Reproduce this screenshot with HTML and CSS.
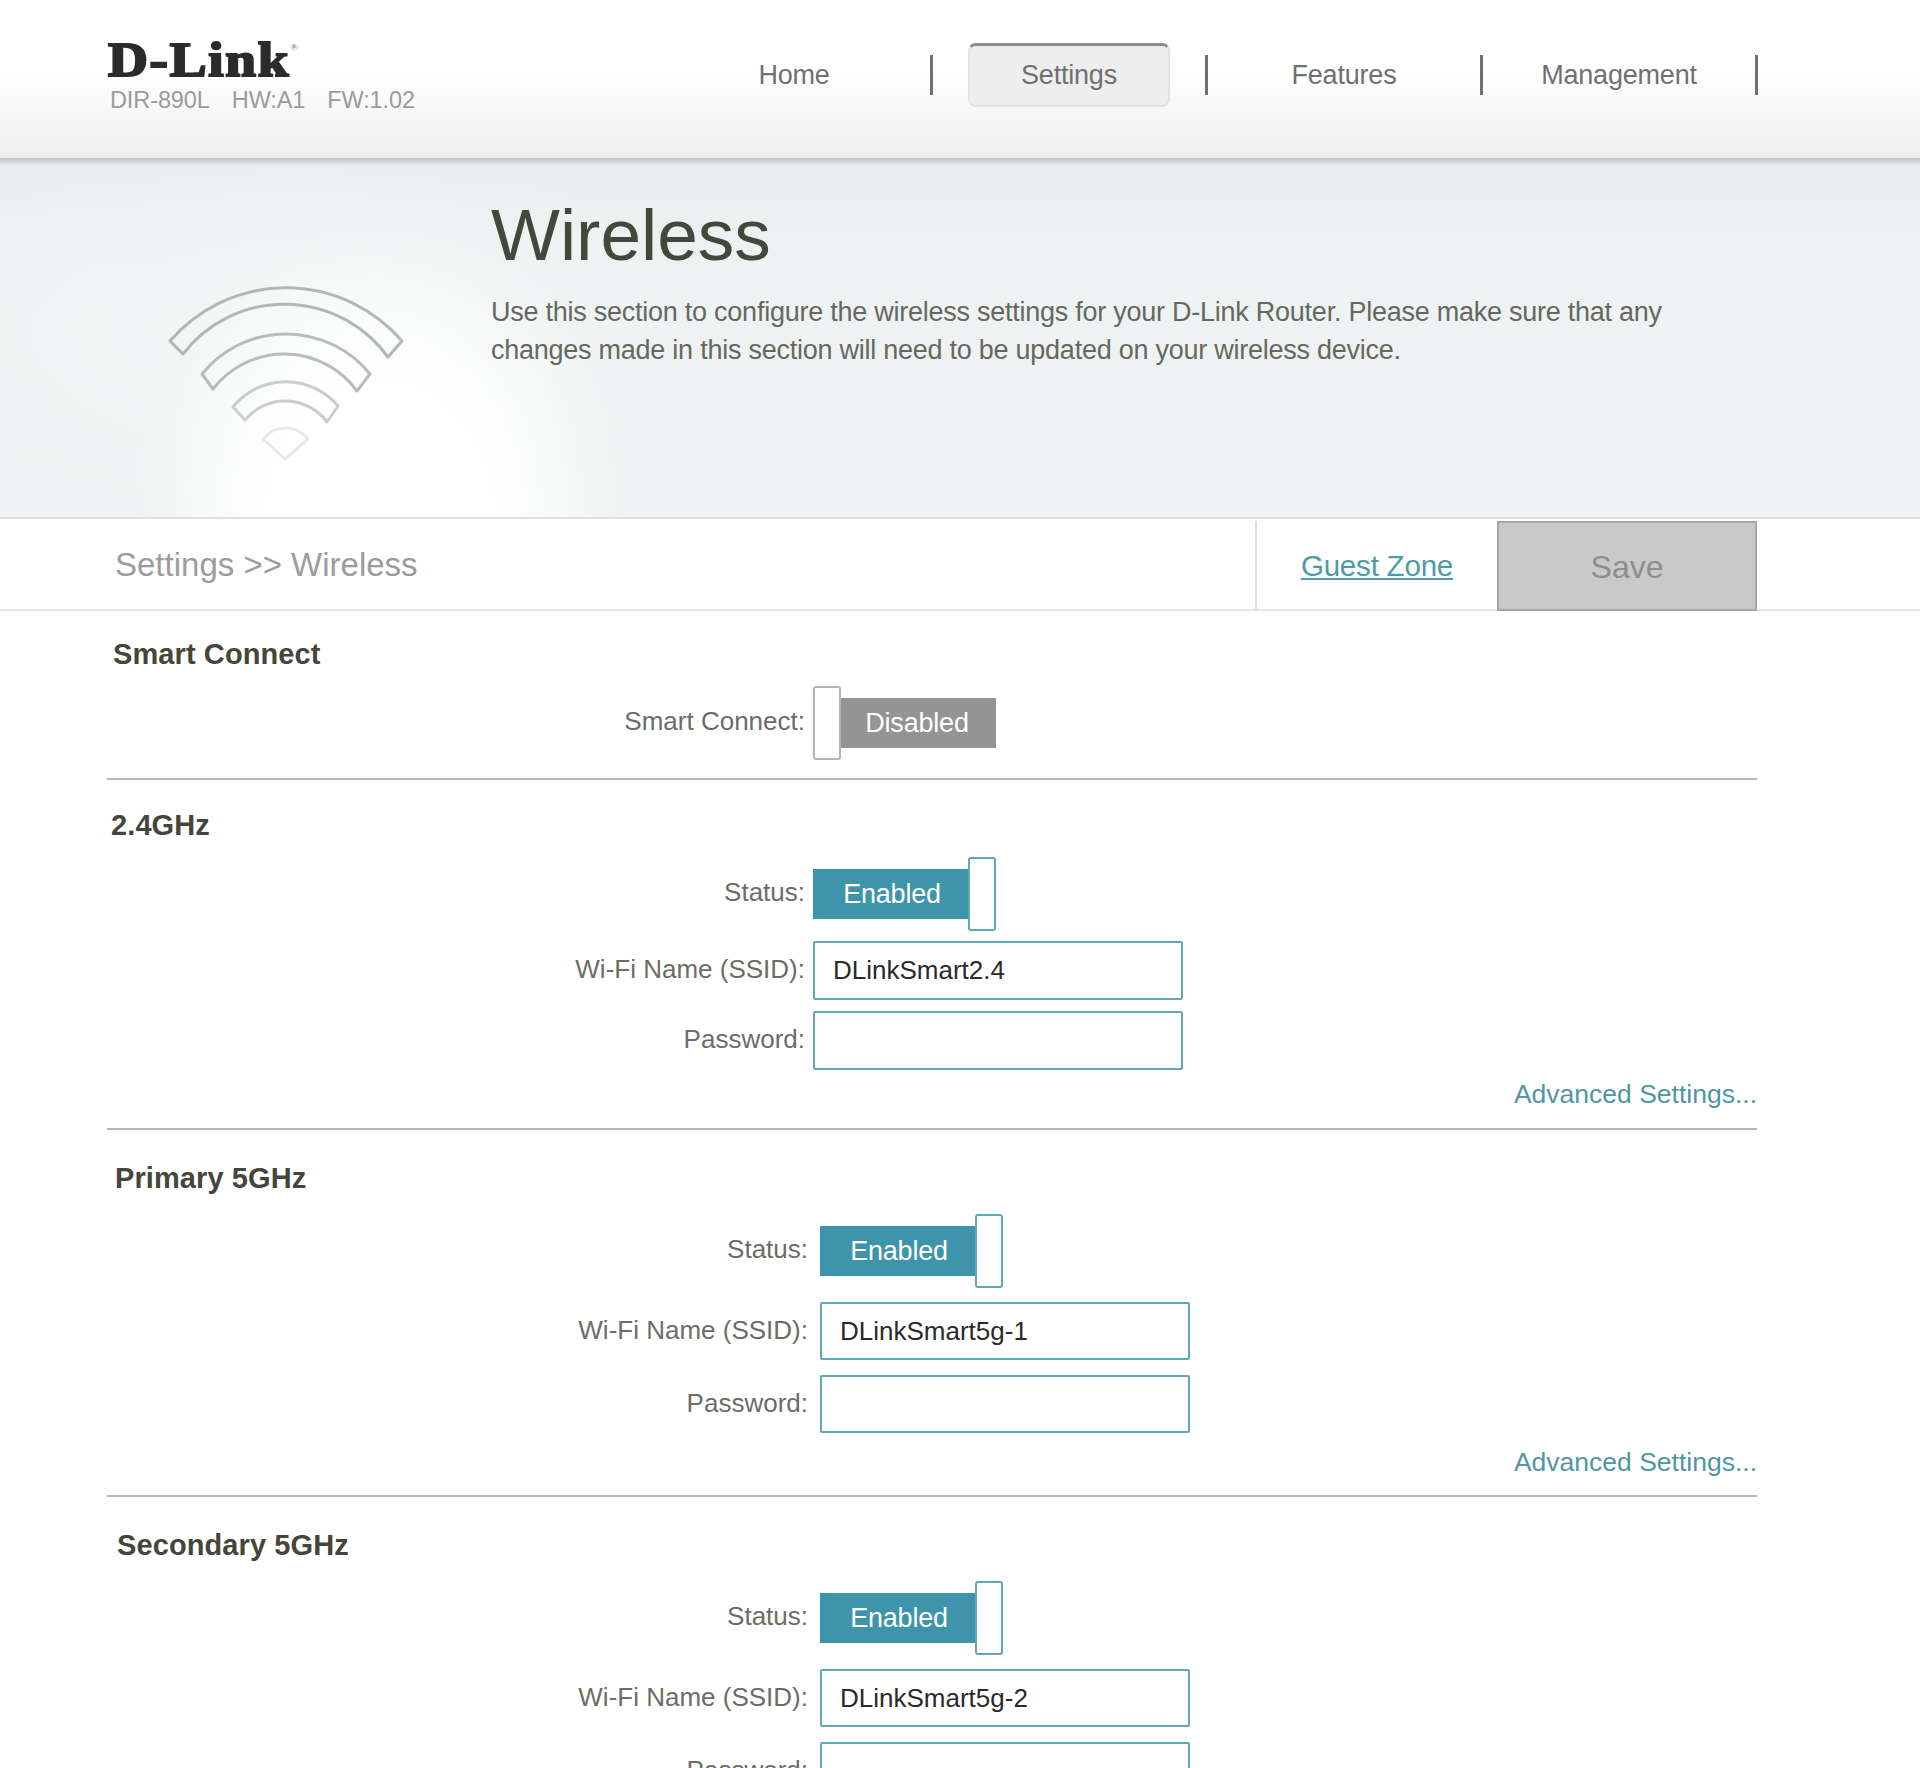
FILE: index.html
```html
<!DOCTYPE html>
<html lang="en">

<head>
    <meta charset="UTF-8">
    <meta name="viewport" content="width=device-width, initial-scale=1.0">
    <title>D-Link Wireless</title>
    <link rel="stylesheet" href="styles.css">
</head>

<body>
    <div class="page">
        <div class="header">
            <div class="header__brand">
                <div class="logo">D-Link<sup class="logo__mark">®</sup></div>
                <p class="model"><span>DIR-890L</span><span>HW:A1</span><span>FW:1.02</span></p>
            </div>
            <div class="nav">
                <div class="nav__item"><a class="nav__link">Home</a></div>
                <div class="nav__item"><a class="nav__link nav__link--active">Settings</a></div>
                <div class="nav__item"><a class="nav__link">Features</a></div>
                <div class="nav__item"><a class="nav__link">Management</a></div>
            </div>
        </div>

        <div class="banner">
            <svg class="banner__icon" viewBox="165 282 242 180" width="242" height="180">
                <path class="arc arc--1" d="M170 340 A153 153 0 0 1 402 340 L388 356 A128 128 0 0 0 183 353 Z" />
                <path class="arc arc--2" d="M202 373 A108 108 0 0 1 370 373 L357 390 A90 90 0 0 0 213 388 Z" />
                <path class="arc arc--3" d="M233 406 A68 68 0 0 1 338 405 L327 421 A52 52 0 0 0 245 419 Z" />
                <path class="arc arc--4" d="M263 438 A28.5 28.5 0 0 1 308 438 L285 458 Z" />
            </svg>
            <div class="banner__text">
                <h1>Wireless</h1>
                <p>Use this section to configure the wireless settings for your D-Link Router. Please make sure that any<br>changes made in this section will need to be updated on your wireless device.</p>
            </div>
        </div>

        <div class="crumbs">
            <p class="crumbs__path">Settings &gt;&gt; Wireless</p>
            <div class="crumbs__actions">
                <a class="guest">Guest Zone</a>
                <button class="save">Save</button>
            </div>
        </div>

        <div class="content">
            <div class="section section--smart">
                <h2>Smart Connect</h2>
                <div class="row row--switch">
                    <label>Smart Connect:</label>
                    <div class="switch switch--off"><span class="switch__knob"></span>Disabled</div>
                </div>
            </div>

            <div class="section section--24">
                <h2>2.4GHz</h2>
                <div class="row row--switch">
                    <label>Status:</label>
                    <div class="switch"><span class="switch__knob"></span>Enabled</div>
                </div>
                <div class="row">
                    <label>Wi-Fi Name (SSID):</label>
                    <input class="field" type="text" value="DLinkSmart2.4">
                </div>
                <div class="row">
                    <label>Password:</label>
                    <input class="field" type="text">
                </div>
                <a class="advanced">Advanced Settings...</a>
            </div>

            <div class="section section--5g">
                <h2>Primary 5GHz</h2>
                <div class="row row--switch">
                    <label>Status:</label>
                    <div class="switch"><span class="switch__knob"></span>Enabled</div>
                </div>
                <div class="row">
                    <label>Wi-Fi Name (SSID):</label>
                    <input class="field" type="text" value="DLinkSmart5g-1">
                </div>
                <div class="row">
                    <label>Password:</label>
                    <input class="field" type="text">
                </div>
                <a class="advanced">Advanced Settings...</a>
            </div>

            <div class="section section--5g section--last">
                <h2>Secondary 5GHz</h2>
                <div class="row row--switch">
                    <label>Status:</label>
                    <div class="switch"><span class="switch__knob"></span>Enabled</div>
                </div>
                <div class="row">
                    <label>Wi-Fi Name (SSID):</label>
                    <input class="field" type="text" value="DLinkSmart5g-2">
                </div>
                <div class="row">
                    <label>Password:</label>
                    <input class="field" type="text">
                </div>
            </div>
        </div>
    </div>
</body>

</html>
```

FILE: styles.css
```css
* {
    margin: 0;
    padding: 0;
    box-sizing: border-box;
}

html,
body {
    height: 1768px;
    overflow: hidden;
    background-color: #fff;
}

body {
    font-family: "Liberation Sans", Arial, sans-serif;
}

.page {
    width: 1920px;
    height: 1768px;
    overflow: hidden;
}

/* header */
.header {
    height: 158px;
    display: flex;
    background: linear-gradient(#fff 0%, #fff 45%, #f6f6f6 75%, #eeeeee 100%);
}

.header__brand {
    width: 658px;
    padding: 36px 0 0 108px;
}

.logo {
    width: 170px;
    height: 48px;
    font-family: "Liberation Serif", serif;
    font-size: 48px;
    font-weight: 700;
    line-height: 48px;
    letter-spacing: 1.5px;
    color: #2b2b2b;
    -webkit-text-stroke: 2px #2b2b2b;
    white-space: nowrap;
    transform: scaleX(1.15);
    transform-origin: left;
}

.logo__mark {
    font-size: 9px;
    letter-spacing: 0;
    vertical-align: 26px;
    line-height: 0;
    -webkit-text-stroke: 0;
    color: #888;
}

.model {
    display: flex;
    gap: 22px;
    margin-top: 1px;
    padding-left: 2px;
    font-size: 23.5px;
    line-height: 30px;
    letter-spacing: -0.1px;
    color: #9b9b9b;
}

.nav {
    display: flex;
}

.nav__item {
    width: 275px;
    height: 40px;
    margin-top: 55px;
    border-right: 3px solid #707070;
    display: flex;
    align-items: center;
    justify-content: center;
}

.nav__link {
    font-size: 27px;
    letter-spacing: -0.2px;
    color: #707070;
}

.nav__link--active {
    width: 202px;
    height: 64px;
    display: flex;
    align-items: center;
    justify-content: center;
    background-color: #eeeeee;
    border: 2px solid #e2e2e2;
    border-top: 3px solid #8c8c8c;
    border-radius: 8px;
}

/* banner */
.banner {
    height: 361px;
    display: flex;
    border-bottom: 2px solid #dfe1e1;
    background:
        linear-gradient(rgba(185, 190, 190, 0.9), rgba(225, 231, 232, 0) 8px),
        radial-gradient(ellipse 250px 300px at 380px 361px, #fff 45%, rgba(255, 255, 255, 0) 100%),
        radial-gradient(ellipse 420px 200px at 300px 170px, rgba(255, 255, 255, 0.35), rgba(255, 255, 255, 0) 100%),
        linear-gradient(#e8eef0 0%, #eef2f2 30%, #f0f3f3 100%);
}

.banner__icon {
    flex: none;
    margin: 125px 0 0 165px;
}

.arc {
    fill: none;
    stroke-width: 3;
    stroke-linejoin: round;
}

.arc--1 {
    stroke: #b4b7b7;
}

.arc--2 {
    stroke: #b9bcbc;
}

.arc--3 {
    stroke: #cbcdcd;
}

.arc--4 {
    stroke: #e8eaea;
}

.banner__text {
    margin-left: 84px;
    padding-top: 35px;
}

h1 {
    font-size: 73px;
    font-weight: 400;
    line-height: 84px;
    color: #45473c;
}

.banner__text p {
    margin-top: 16px;
    font-size: 27px;
    line-height: 38px;
    letter-spacing: -0.25px;
    color: #666860;
    white-space: nowrap;
}

/* breadcrumb bar */
.crumbs {
    height: 92px;
    display: flex;
    justify-content: space-between;
    padding: 2px 163px 0 115px;
    border-bottom: 2px solid #e6e6e6;
}

.crumbs__path {
    font-size: 33px;
    line-height: 88px;
    color: #9c9c9c;
}

.crumbs__actions {
    display: flex;
}

.guest {
    width: 242px;
    border-left: 2px solid #e0e0e0;
    font-size: 29.5px;
    line-height: 90px;
    letter-spacing: -0.2px;
    text-align: center;
    color: #4f9aa6;
    text-decoration: underline;
}

.save {
    width: 260px;
    height: 90px;
    padding-top: 2px;
    font-family: inherit;
    font-size: 32px;
    color: #8e8e8e;
    background-color: #c9c9c9;
    border: 2px solid #a6a6a6;
}

/* settings */
.content {
    width: 1650px;
    margin-left: 107px;
}

.section {
    padding-top: 30px;
    padding-bottom: 18px;
    border-bottom: 2px solid #b5b7b7;
}

.section h2 {
    padding-left: 10px;
    font-size: 29px;
    font-weight: 700;
    line-height: 36px;
    letter-spacing: 0.1px;
    color: #44463a;
}

.section--smart {
    padding-top: 25px;
    padding-bottom: 19px;
}

.section--smart h2 {
    padding-left: 6px;
}

.section--24 {
    padding-top: 27px;
    padding-bottom: 19px;
}

.section--24 h2 {
    padding-left: 4px;
}

.section--5g h2 {
    padding-left: 8px;
}

.section--last {
    border-bottom: 0;
}

.section--last h2 {
    padding-left: 10px;
}

.row {
    display: flex;
    align-items: center;
    margin-top: 11px;
}

.row label {
    width: 706px;
    padding-right: 8px;
    margin-bottom: 2px;
    font-size: 26px;
    text-align: right;
    color: #6b6d66;
}

.row--switch {
    height: 73px;
    margin-top: 14px;
}

.section--5g .row {
    margin-top: 15px;
}

.section--5g .row--switch {
    margin-top: 18px;
}

.section--5g label {
    width: 713px;
    padding-right: 12px;
}

.switch {
    position: relative;
    width: 183px;
    height: 50px;
    padding-right: 25px;
    font-size: 27px;
    line-height: 50px;
    letter-spacing: -0.2px;
    text-align: center;
    color: #fff;
    background-color: #3e95ab;
}

.switch__knob {
    position: absolute;
    top: -12px;
    right: 0;
    width: 28px;
    height: 74px;
    background-color: #fff;
    border: 2px solid #5fa8b9;
    border-radius: 3px;
}

.switch--off {
    padding: 0 0 0 25px;
    background-color: #949494;
}

.switch--off .switch__knob {
    left: 0;
    right: auto;
    border-color: #b4b4b4;
}

.field {
    width: 370px;
    height: 59px;
    padding: 0 18px;
    font-family: inherit;
    font-size: 26px;
    color: #2a2a2a;
    background-color: #fff;
    border: 2px solid #5fa8b9;
    border-radius: 2px;
}

.section--5g .field {
    height: 58px;
}

.advanced {
    display: block;
    margin-top: 9px;
    font-size: 26.5px;
    line-height: 30px;
    text-align: right;
    color: #4f96a6;
}

.section--5g .advanced {
    margin-top: 14px;
}
```
